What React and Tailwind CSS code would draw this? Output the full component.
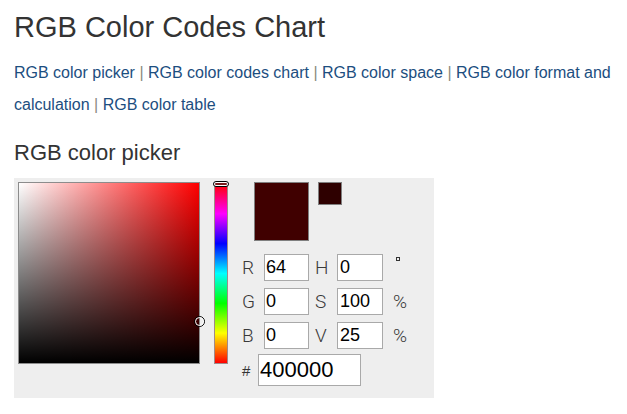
import React from "react";

const sep = <> <span className="text-[#8a8a80]">|</span> </>;

function Row({ l1, v1, l2, v2, unit, deg }) {
  return (
    <div className="flex items-center h-[27px]">
      <span className="w-[22px] text-[19px] font-light leading-none text-[#3a3a3a]" style={{ fontFamily: "Roboto, 'Liberation Sans', sans-serif" }}>{l1}</span>
      <div className="w-[45px] h-[27px] border border-[#a9a9a9] bg-white text-[18px] leading-[25px] pl-[1px] text-black">{v1}</div>
      <span className="w-[6px]" />
      <span className="w-[22px] text-[19px] font-light leading-none text-[#3a3a3a]" style={{ fontFamily: "Roboto, 'Liberation Sans', sans-serif" }}>{l2}</span>
      <div className="w-[46px] h-[27px] border border-[#a9a9a9] bg-white text-[18px] leading-[25px] pl-[2px] text-black">{v2}</div>
      {deg ? (
        <span className="ml-[13px] self-start mt-[3px] w-[4px] h-[4px] border border-[#333]" />
      ) : (
        <span className="ml-[10px] text-[19px] font-light leading-none text-[#3a3a3a]" style={{ fontFamily: "Roboto, 'Liberation Sans', sans-serif" }}>{unit}</span>
      )}
    </div>
  );
}

export default function App() {
  return (
    <div className="pl-[14px] text-[#333]" style={{ fontFamily: "'Liberation Sans', Arial, sans-serif" }}>
      <h1 className="pt-[11px] text-[29px] leading-[33px] font-normal">RGB Color Codes Chart</h1>
      <p className="mt-[13px] text-[16px] leading-[32px] text-[#1c4e80] pr-[10px]">
        RGB color picker{sep}RGB color codes chart{sep}RGB color space{sep}RGB color format and calculation{sep}RGB color table
      </p>
      <h2 className="mt-[19px] text-[22px] leading-[26px] font-normal">RGB color picker</h2>
      <div className="mt-[12px] w-[420px] h-[220px] bg-[#eeeeee] flex pl-[4px] pt-[4px]">
        <div className="relative w-[182px] h-[182px] border border-[#8c8c8c] bg-[linear-gradient(to_top,#000,rgba(0,0,0,0)),linear-gradient(to_right,#fff,#f00)]">
          <div className="absolute left-[175px] top-[133px] w-[11px] h-[11px] rounded-full border border-black">
            <div className="w-full h-full rounded-full border border-white" />
          </div>
        </div>
        <div className="relative ml-[14px] mt-[1px] w-[14px] h-[181px] border border-[#a08a8a] bg-[linear-gradient(to_bottom,#f00,#f0f,#00f,#0ff,#0f0,#ff0,#f00)]">
          <div className="absolute -left-[2px] -top-[3px] w-[16px] h-[6px] rounded-full border border-black bg-white p-[1px]">
            <div className="w-full h-full rounded-full bg-[#7a1a1a]" />
          </div>
        </div>
        <div className="ml-[14px] flex flex-col">
          <div className="flex items-start pl-[12px]">
            <div className="w-[55px] h-[59px] border border-[#7f7f7f] bg-[#400000]" />
            <div className="ml-[9px] w-[24px] h-[23px] border border-[#7f7f7f] bg-[#2e0000]" />
          </div>
          <div className="mt-[13px] flex flex-col gap-[7px]">
            <Row l1="R" v1="64" l2="H" v2="0" deg />
            <Row l1="G" v1="0" l2="S" v2="100" unit="%" />
            <Row l1="B" v1="0" l2="V" v2="25" unit="%" />
          </div>
          <div className="mt-[5px] flex items-center h-[32px]">
            <span className="w-[16px] text-[15px] leading-none text-[#333]">#</span>
            <div className="w-[103px] h-[32px] border border-[#a9a9a9] bg-white text-[22px] leading-[30px] pl-[1px] text-black">400000</div>
          </div>
        </div>
      </div>
    </div>
  );
}
